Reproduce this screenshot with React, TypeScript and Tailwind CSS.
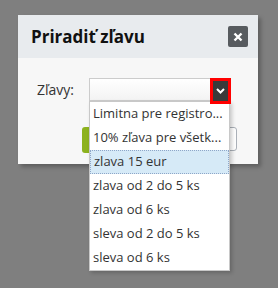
const options = [
  "Limitna pre registro...",
  "10% zľava pre všetk...",
  "zlava 15 eur",
  "zlava od 2 do 5 ks",
  "zlava od 6 ks",
  "sleva od 2 do 5 ks",
  "sleva od 6 ks",
];

export default function App() {
  return (
    <div className="h-[288px] w-[278px] overflow-hidden bg-[#7f7f7f] pl-[18px] pt-[15px] font-['Open_Sans',sans-serif] text-[#333]">
      <div className="relative w-[240px] shadow-[3px_3px_4px_rgba(0,0,0,0.25)]">
        <div className="flex h-[43px] items-center justify-between bg-[#e8ebee] pl-[13px] pr-[10px]">
          <h2 className="text-[17px] font-bold leading-none text-[#111]">Priradiť zľavu</h2>
          <button className="flex h-[21px] w-[20px] items-center justify-center rounded-[2px] bg-[#575b5f]">
            <svg width="10" height="10" viewBox="0 0 10 10">
              <path d="M1.5 1.5L8.5 8.5M8.5 1.5L1.5 8.5" stroke="#fff" strokeWidth="2.4" />
            </svg>
          </button>
        </div>
        <div className="h-[106px] bg-[#f7f7f7] pt-[20px]">
          <div className="flex items-center">
            <label className="w-[71px] pl-[19px] text-[14px]">Zľavy:</label>
            <div className="flex h-[23px] w-[142px] items-start border border-[#ccc] bg-gradient-to-b from-white to-[#f3f3f3]">
              <div className="flex-1" />
              <div className="relative z-10 -mr-px -mt-px flex h-[26px] w-[21px] items-center justify-center border-[3px] border-[#f00] bg-[#3a3a3a]">
                <svg width="9" height="6" viewBox="0 0 9 6">
                  <path d="M1 1L4.5 4.5L8 1" stroke="#fff" strokeWidth="2" fill="none" />
                </svg>
              </div>
            </div>
          </div>
          <div className="mt-[26px] flex justify-between pl-[64px] pr-[21px]">
            <button className="h-[26px] w-[60px] rounded-[3px] bg-[#8db21e]" />
            <button className="h-[24px] w-[60px] rounded-[3px] border border-[#aab0b8] bg-white" />
          </div>
        </div>
        <ul className="absolute left-[71px] top-[86px] w-[141px] border border-[#c8c8c8] bg-white shadow-[2px_2px_4px_rgba(0,0,0,0.2)]">
          {options.map((o, i) => (
            <li
              key={o}
              className={
                "flex h-[24px] items-center whitespace-nowrap pl-[3px] text-[13px] " +
                (i === 2 ? "border border-dotted border-[#8ea6c8] bg-[#d6eaf7] pl-[2px]" : "")
              }
            >
              {o}
            </li>
          ))}
        </ul>
      </div>
    </div>
  );
}
